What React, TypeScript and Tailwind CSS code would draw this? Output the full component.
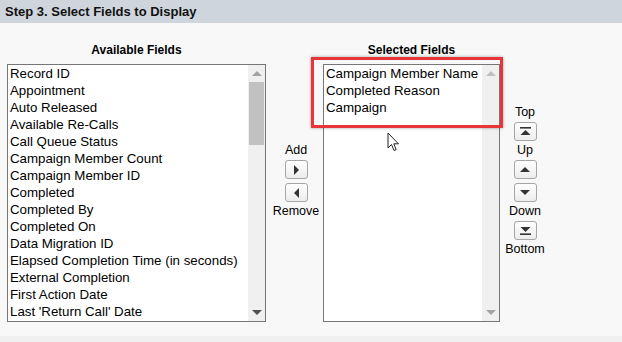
import React from "react";

const available = [
  "Record ID",
  "Appointment",
  "Auto Released",
  "Available Re-Calls",
  "Call Queue Status",
  "Campaign Member Count",
  "Campaign Member ID",
  "Completed",
  "Completed By",
  "Completed On",
  "Data Migration ID",
  "Elapsed Completion Time (in seconds)",
  "External Completion",
  "First Action Date",
  "Last 'Return Call' Date",
];

const selected = ["Campaign Member Name", "Completed Reason", "Campaign"];

function Tri({ dir, color }: { dir: "up" | "down" | "left" | "right"; color: string }) {
  const pts: Record<string, string> = {
    up: "0,5 5,0 10,5",
    down: "0,0 10,0 5,5",
    left: "6,0 6,10 1,5",
    right: "1,0 1,10 6,5",
  };
  const vertical = dir === "up" || dir === "down";
  return (
    <svg width={vertical ? 10 : 7} height={vertical ? 5 : 10} viewBox={vertical ? "0 0 10 5" : "0 0 7 10"}>
      <polygon points={pts[dir]} fill={color} />
    </svg>
  );
}

function ListBox({ items, thumb }: { items: string[]; thumb: boolean }) {
  return (
    <div className="flex h-[258px] border border-[#767676] bg-white">
      <div className="flex-1 overflow-hidden pl-[2px]">
        {items.map((t) => (
          <div key={t} className="h-[17px] whitespace-nowrap text-[13.3px] leading-[17px] text-black">
            {t}
          </div>
        ))}
      </div>
      <div className="flex w-[17px] flex-col bg-[#f0f0f0]">
        <div className="flex h-[17px] items-center justify-center">
          <Tri dir="up" color={thumb ? "#a3a3a3" : "#c0c0c0"} />
        </div>
        <div className="flex-1 px-[1px]">
          {thumb && <div className="h-[63px] w-full bg-[#c1c1c1]" />}
        </div>
        <div className="flex h-[17px] items-center justify-center">
          <Tri dir="down" color={thumb ? "#505050" : "#a3a3a3"} />
        </div>
      </div>
    </div>
  );
}

function Btn({ children }: { children: React.ReactNode }) {
  return (
    <div className="flex h-[19px] w-[23px] items-center justify-center rounded-[3px] border border-[#a6a6a6] bg-gradient-to-b from-white to-[#ececec]">
      {children}
    </div>
  );
}

function Label({ children }: { children: React.ReactNode }) {
  return <div className="text-[12.5px] leading-[15px] text-black">{children}</div>;
}

export default function App() {
  return (
    <div className="flex h-[342px] w-[622px] flex-col font-['Liberation_Sans',Arial,sans-serif]">
      <div className="flex h-[23px] items-center bg-[#cfd5dc] px-[5px] text-[13px] font-bold text-[#111]">
        Step 3. Select Fields to Display
      </div>
      <div className="flex flex-1 bg-[#f8f8f8] pl-[7px] pt-[20px]">
        <div className="flex w-[259px] flex-col">
          <div className="mb-[6px] h-[15px] text-center text-[12px] font-bold leading-[15px] text-black">
            Available Fields
          </div>
          <ListBox items={available} thumb={true} />
        </div>
        <div className="flex w-[57px] flex-col items-center pl-[3px] pt-[100px]">
          <Label>Add</Label>
          <div className="mt-[2px] flex flex-col gap-[4px]">
            <Btn>
              <Tri dir="right" color="#333" />
            </Btn>
            <Btn>
              <Tri dir="left" color="#333" />
            </Btn>
          </div>
          <div className="mt-[2px]">
            <Label>Remove</Label>
          </div>
        </div>
        <div className="relative flex w-[177px] flex-col">
          <div className="mb-[6px] h-[15px] text-center text-[12px] font-bold leading-[15px] text-black">
            Selected Fields
          </div>
          <ListBox items={selected} thumb={false} />
          <div className="pointer-events-none absolute left-[-12px] top-[14px] h-[71px] w-[192px] border-[3px] border-[#e8353a] shadow-[0_0_3px_rgba(0,0,0,0.35)]" />
          <svg
            className="absolute left-[64px] top-[89px]"
            width="13"
            height="20"
            viewBox="0 0 13 20"
          >
            <path
              d="M1 1 L1 16 L4.5 12.5 L7 18.5 L9.2 17.6 L6.8 11.8 L11.5 11.8 Z"
              fill="white"
              stroke="#222"
              strokeWidth="1"
              strokeLinejoin="round"
            />
          </svg>
        </div>
        <div className="flex w-[50px] flex-col items-center pt-[62px]">
          <Label>Top</Label>
          <div className="mt-[2px]">
            <Btn>
              <svg width="11" height="9" viewBox="0 0 11 9">
                <rect x="0" y="0" width="11" height="1.6" fill="#333" />
                <polygon points="0.5,8 5.5,3 10.5,8" fill="#333" />
              </svg>
            </Btn>
          </div>
          <div className="mt-[2px]">
            <Label>Up</Label>
          </div>
          <div className="mt-[2px] flex flex-col gap-[4px]">
            <Btn>
              <Tri dir="up" color="#333" />
            </Btn>
            <Btn>
              <Tri dir="down" color="#333" />
            </Btn>
          </div>
          <div className="mt-[2px]">
            <Label>Down</Label>
          </div>
          <div className="mt-[2px]">
            <Btn>
              <svg width="11" height="9" viewBox="0 0 11 9">
                <polygon points="0.5,1 10.5,1 5.5,6" fill="#333" />
                <rect x="0" y="7.4" width="11" height="1.6" fill="#333" />
              </svg>
            </Btn>
          </div>
          <div className="mt-[2px]">
            <Label>Bottom</Label>
          </div>
        </div>
      </div>
      <div className="h-[6px] bg-[#f0f0f0]" />
    </div>
  );
}
